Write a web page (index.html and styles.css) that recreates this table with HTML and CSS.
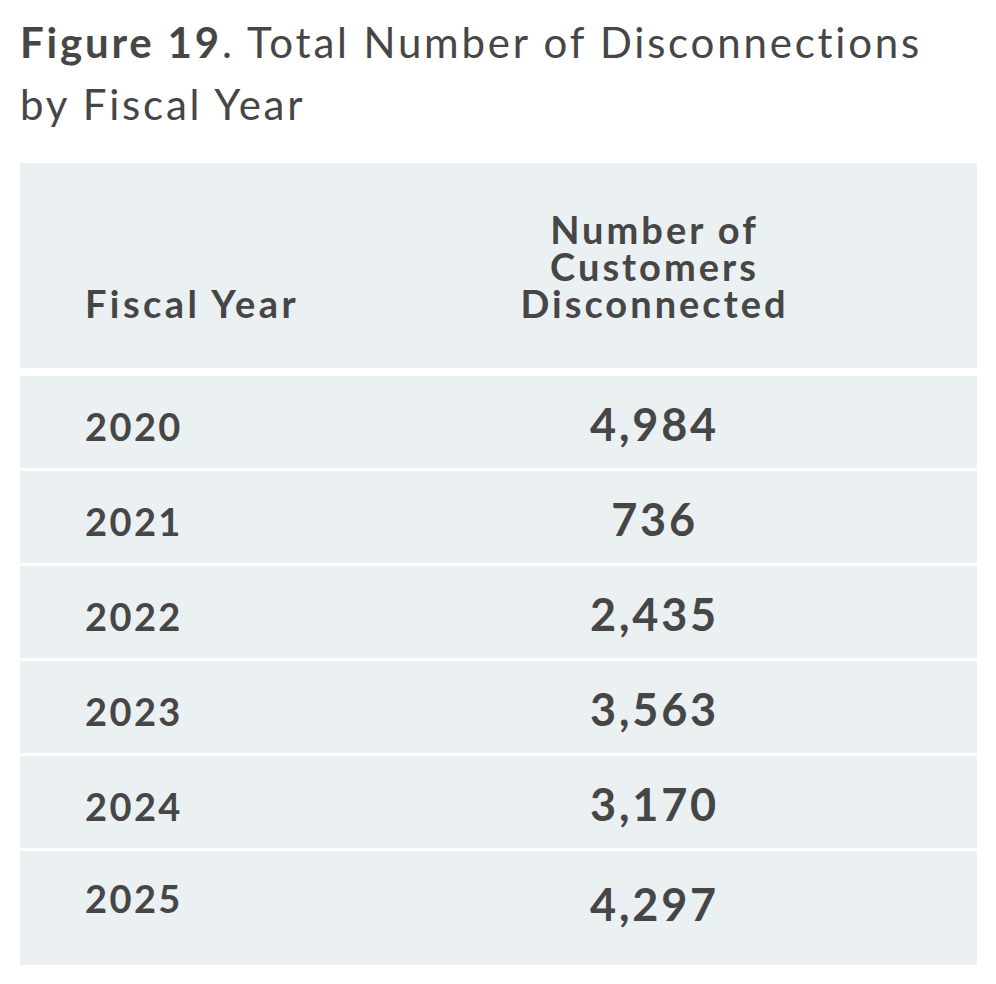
FILE: index.html
```html
<!DOCTYPE html>
<html lang="en">
<head>
<meta charset="utf-8">
<title>Figure 19. Total Number of Disconnections by Fiscal Year</title>
<link rel="stylesheet" href="styles.css">
</head>
<body>
<main class="figure">
  <h1 class="title"><strong>Figure 19</strong>. Total Number of Disconnections by Fiscal Year</h1>
  <div class="table" role="table">
    <div class="row head" role="row">
      <div class="cell year" role="columnheader">Fiscal Year</div>
      <div class="cell count" role="columnheader">Number of<br>Customers<br>Disconnected</div>
    </div>
    <div class="body">
      <div class="row" role="row"><div class="cell year">2020</div><div class="cell count">4,984</div></div>
      <div class="row" role="row"><div class="cell year">2021</div><div class="cell count">736</div></div>
      <div class="row" role="row"><div class="cell year">2022</div><div class="cell count">2,435</div></div>
      <div class="row" role="row"><div class="cell year">2023</div><div class="cell count">3,563</div></div>
      <div class="row" role="row"><div class="cell year">2024</div><div class="cell count">3,170</div></div>
      <div class="row last" role="row"><div class="cell year">2025</div><div class="cell count">4,297</div></div>
    </div>
  </div>
</main>
</body>
</html>
```

FILE: styles.css
```css
* { box-sizing: border-box; }

html, body {
  margin: 0;
  padding: 0;
  background: #ffffff;
}

body {
  font-family: "Lato", "Noto Sans", "Liberation Sans", sans-serif;
  color: #464646;
}

.figure {
  padding: 11px 19px 0 20px;
}

.title {
  margin: 0 0 28px 0;
  max-width: 935px;
  font-size: 42px;
  line-height: 62px;
  font-weight: 400;
  letter-spacing: 2.8px;
}

.title strong {
  font-weight: 700;
}

.table {
  display: flex;
  flex-direction: column;
  gap: 8px;
}

.body {
  display: flex;
  flex-direction: column;
  gap: 3px;
}

.row {
  display: grid;
  grid-template-columns: 312px 1fr;
  align-items: center;
  background: #ebf0f3;
  min-height: 92px;
  font-weight: 700;
}

.row.head {
  align-items: end;
  padding: 44px 0 46px 0;
  font-size: 38px;
  line-height: 37px;
  letter-spacing: 3px;
}

.row.head .cell.count {
  text-align: center;
  font-size: 38px;
  letter-spacing: 3px;
}

.row.head .cell.year {
  margin: 0;
  font-size: 38px;
  line-height: 37px;
  letter-spacing: 3.4px;
}

.cell.year {
  padding-left: 65px;
  font-size: 38px;
  letter-spacing: 2.4px;
  margin-top: 8px;
}

.cell.count {
  text-align: center;
  font-size: 45px;
  letter-spacing: 2.8px;
  margin-top: 4px;
}

.row.last {
  min-height: 114px;
  padding-bottom: 8px;
}

.row.last .cell.year {
  margin-top: 0;
  margin-bottom: 13px;
}

.row.last .cell.count {
  margin-top: 0;
}
```
